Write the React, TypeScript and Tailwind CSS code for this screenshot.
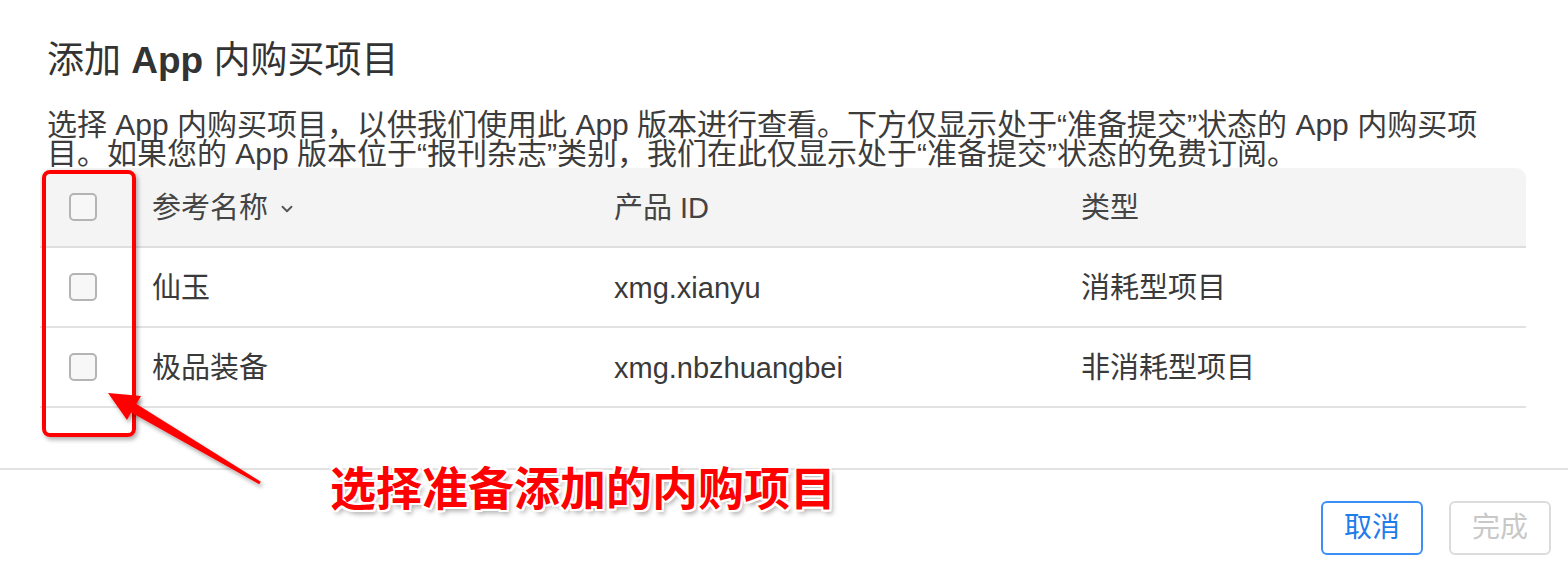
import { ChevronDown } from 'lucide-react';

const rows = [
  { name: '仙玉', id: 'xmg.xianyu', type: '消耗型项目' },
  { name: '极品装备', id: 'xmg.nbzhuangbei', type: '非消耗型项目' },
];

function Checkbox() {
  return <div className="w-[28px] h-[28px] rounded-[5px] border-2 border-[#b4b4b4] bg-[#f7f7f7]" />;
}

export default function App() {
  return (
    <div className="relative h-[578px] w-[1568px] overflow-hidden bg-white font-['Liberation_Sans','Noto_Sans_CJK_SC',sans-serif] text-[#3a3a3a]">
      <div className="pl-[40px] pr-[42px] pt-[40px]">
        <h1 className="pl-[7px] text-[37px] leading-[42px] text-[#333]">
          添加 <span className="font-bold">App</span> 内购买项目
        </h1>

        <p className="mt-[28px] pl-[7px] text-[30px] leading-[29px] text-[#3c3c3c]">
          <span className="block whitespace-nowrap">选择 App 内购买项目，以供我们使用此 App 版本进行查看。下方仅显示处于“准备提交”状态的 App 内购买项</span>
          <span className="block whitespace-nowrap">目。如果您的 App 版本位于“报刊杂志”类别，我们在此仅显示处于“准备提交”状态的免费订阅。</span>
        </p>

        {/* Table */}
        <div className="text-[29px]">
          <div className="grid h-[80px] grid-cols-[94px_462px_467px_1fr] items-center rounded-t-[10px] border-b-2 border-[#dedede] bg-[#f4f4f4] pt-[4px] text-[#444]">
            <div className="pl-[29px] pb-[4px]"><Checkbox /></div>
            <div className="flex items-center gap-[10px] pl-[18px]">
              参考名称 <ChevronDown size={18} strokeWidth={2.5} className="text-[#555]" />
            </div>
            <div className="pl-[18px]">产品 ID</div>
            <div className="pl-[18px]">类型</div>
          </div>
          {rows.map(r => (
            <div key={r.id} className="grid h-[80px] grid-cols-[94px_462px_467px_1fr] items-center border-b-2 border-[#e2e2e2] pt-[4px]">
              <div className="pl-[29px] pb-[4px]"><Checkbox /></div>
              <div className="pl-[18px]">{r.name}</div>
              <div className="pl-[18px]">{r.id}</div>
              <div className="pl-[18px]">{r.type}</div>
            </div>
          ))}
        </div>
      </div>

      {/* Footer */}
      <div className="mt-[60px] h-[2px] w-full bg-[#e2e2e2]" />
      <div className="flex justify-end gap-[26px] pr-[17px] pt-[31px]">
        <button className="h-[54px] w-[102px] rounded-[6px] border-2 border-[#3b8ff5] text-[28px] text-[#1f7ceb]">取消</button>
        <button className="h-[54px] w-[102px] rounded-[6px] border-2 border-[#dcdcdc] text-[28px] text-[#c8c8c8]">完成</button>
      </div>

      {/* Annotation */}
      <div className="absolute left-[42px] top-[170px] h-[267px] w-[94px] rounded-[8px] border-4 border-[#ff0000] shadow-[2px_3px_4px_rgba(0,0,0,0.3)]" />
      <svg className="pointer-events-none absolute inset-0" width="1568" height="578">
        <defs>
          <filter id="sh" x="-20%" y="-20%" width="140%" height="140%">
            <feDropShadow dx="2" dy="3" stdDeviation="2" floodColor="#000" floodOpacity="0.35" />
          </filter>
        </defs>
        <polygon
          filter="url(#sh)"
          fill="#ff0000"
          points="108,393 141,396 136.4,404 260.8,481.7 259.2,484.3 131.2,412.6 127,420"
        />
      </svg>
      <div className="absolute left-[330px] top-[462px] text-[46px] font-bold leading-none text-[#ff0000] font-['Noto_Sans_CJK_SC',sans-serif] [text-shadow:-2px_-2px_0_#fff,2px_-2px_0_#fff,-2px_2px_0_#fff,2px_2px_0_#fff,0_2px_0_#fff,2px_0_0_#fff,-2px_0_0_#fff,0_-2px_0_#fff,3px_4px_5px_rgba(0,0,0,0.35)]">
        选择准备添加的内购项目
      </div>
    </div>
  );
}
